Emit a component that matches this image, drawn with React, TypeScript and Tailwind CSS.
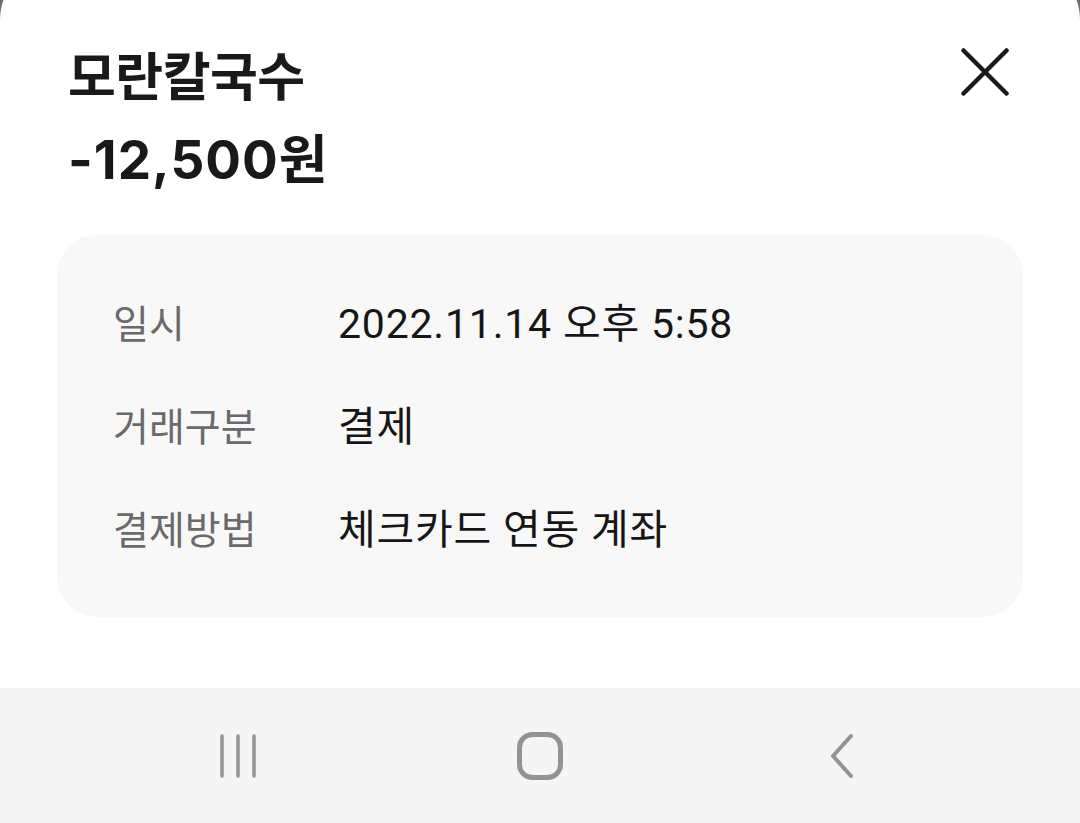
const FONT = "font-['Roboto','Noto_Sans_CJK_KR',sans-serif]";

const rows = [
  { label: "일시", value: "2022.11.14 오후 5:58" },
  { label: "거래구분", value: "결제" },
  { label: "결제방법", value: "체크카드 연동 계좌" },
];

export default function App() {
  return (
    <div className={`w-[1080px] h-[823px] overflow-hidden bg-[#6b6b6b] flex flex-col ${FONT}`}>
      {/* Bottom sheet */}
      <div className="-mt-[40px] bg-white rounded-t-[60px] flex-1 flex flex-col">
        <div className="flex items-start justify-between pl-[68px] pr-[70px] pt-[79px]">
          <div className="flex flex-col">
            <h1 className="text-[52px] leading-[80px] font-bold text-[#191919] tracking-[-0.5px]">모란칼국수</h1>
            <p className="text-[53px] leading-[80px] font-bold text-[#191919] mt-[1px] font-['Inter','Noto_Sans_CJK_KR',sans-serif] tracking-[1px]">-12,500원</p>
          </div>
          <button aria-label="닫기" className="mt-[8px] w-[50px] h-[50px] flex items-center justify-center">
            <svg width="48" height="48" viewBox="0 0 48 48" fill="none" stroke="#1a1a1a" strokeWidth="4.5" strokeLinecap="round">
              <line x1="2.5" y1="2.5" x2="45.5" y2="45.5" />
              <line x1="45.5" y1="2.5" x2="2.5" y2="45.5" />
            </svg>
          </button>
        </div>

        <div className="mx-[57px] mt-[35px] bg-[#f8f8f8] rounded-[40px] h-[382px] px-[56px] pt-[65px] flex flex-col gap-[53px]">
          {rows.map((r) => (
            <div key={r.label} className="flex items-center h-[50px]">
              <span className="w-[225px] text-[39px] text-[#6a6a6a]">{r.label}</span>
              <span className="text-[41px] tracking-[0.8px] text-[#161616]">{r.value}</span>
            </div>
          ))}
        </div>

        <div className="flex-1" />

        {/* Android navigation bar */}
        <div className="h-[135px] bg-[#f5f5f5] flex items-center justify-center">
          <div className="w-[302px] flex justify-center">
            <svg width="44" height="46" viewBox="0 0 44 46" fill="none" stroke="#939393" strokeWidth="3.5" strokeLinecap="round">
              <line x1="6" y1="3" x2="6" y2="43" />
              <line x1="22" y1="3" x2="22" y2="43" />
              <line x1="38" y1="3" x2="38" y2="43" />
            </svg>
          </div>
          <div className="w-[302px] flex justify-center">
            <svg width="48" height="50" viewBox="0 0 48 50" fill="none" stroke="#939393" strokeWidth="5">
              <rect x="3.5" y="3.5" width="41" height="43" rx="13" />
            </svg>
          </div>
          <div className="w-[302px] flex justify-center">
            <svg width="30" height="48" viewBox="0 0 30 48" fill="none" stroke="#939393" strokeWidth="4" strokeLinecap="round" strokeLinejoin="round">
              <polyline points="24,4 6,24 24,44" />
            </svg>
          </div>
        </div>
      </div>
    </div>
  );
}
